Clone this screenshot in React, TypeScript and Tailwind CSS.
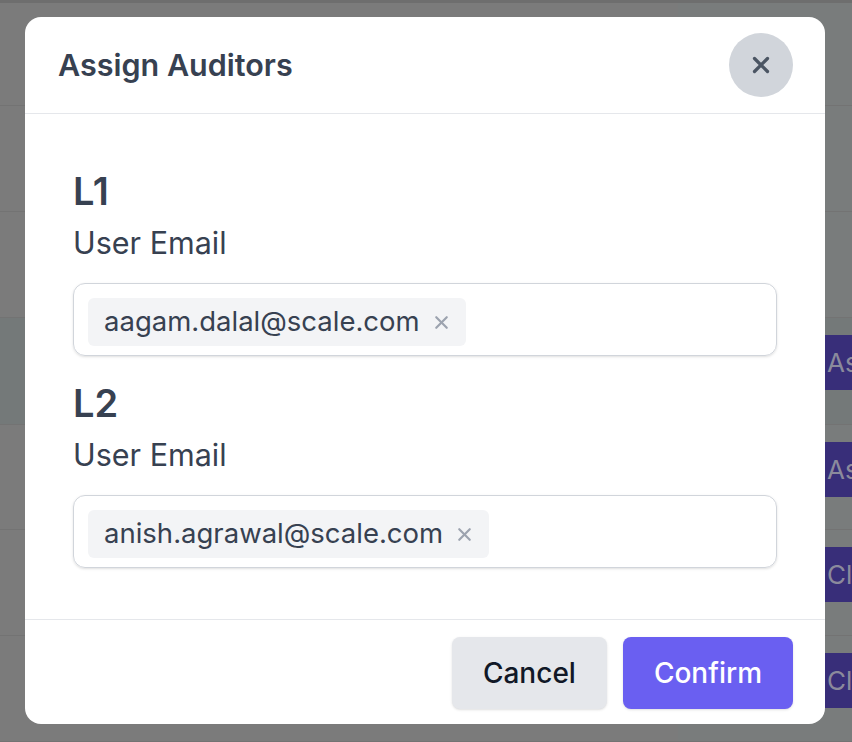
import { X } from 'lucide-react'

const rows = [
    { h: 'h-[103px]', tint: false, btn: '' },
    { h: 'h-[106px]', tint: false, btn: '' },
    { h: 'h-[106px]', tint: false, btn: '' },
    { h: 'h-[107px]', tint: true, btn: 'Assign' },
    { h: 'h-[105px]', tint: false, btn: 'Assign' },
    { h: 'h-[106px]', tint: false, btn: 'Claim' },
    { h: 'h-[106px]', tint: false, btn: 'Claim' },
]

function EmailField({ level, email }: { level: string; email: string }) {
    return (
        <div className="flex flex-col">
            <div className="text-[38px] leading-[40px] font-semibold text-[#374151]">{level}</div>
            <div className="mt-[14px] text-[30.5px] leading-[36px] text-[#374151]">User Email</div>
            <div className="mt-[22px] h-[73px] rounded-xl border border-[#d1d5db] px-[14px] pt-[14px] shadow-sm">
                <span className="inline-flex h-[48px] items-center gap-[11px] rounded-md bg-[#f3f4f6] pl-4 pr-[14px] text-[27.5px] text-[#374151]">
                    {email}
                    <X className="h-[21px] w-[21px] text-[#9ca3af]" strokeWidth={2.5} />
                </span>
            </div>
        </div>
    )
}

export default function App() {
    return (
        <div className="relative h-[742px] w-full overflow-hidden bg-[#7b7b7b]" style={{ fontFamily: 'Inter, "Noto Sans", sans-serif' }}>
            {/* dimmed table underneath */}
            <div className="h-[3px] bg-[#6e6e6e]" />
            {rows.map((r, i) => (
                <div key={i} className={`flex border-b border-[#737373] ${r.h} ${r.tint ? 'bg-[#747979]' : ''}`}>
                    <div className="flex-1" />
                    <div className={`flex w-[174px] items-start pl-[147px] pt-[17px] ${r.tint ? '' : 'bg-[#797c7c]'}`}>
                        {r.btn && (
                            <div className="flex h-[55px] flex-1 items-center overflow-hidden bg-[#382e79] pl-[2px] text-[26px] whitespace-nowrap text-[#8b8a9c]">
                                {r.btn}
                            </div>
                        )}
                    </div>
                </div>
            ))}

            {/* modal */}
            <div className="absolute left-[25px] top-[17px] flex w-[800px] flex-col rounded-2xl bg-white">
                <div className="flex items-center justify-between border-b border-[#e5e7eb] py-4 pl-[33px] pr-8">
                    <h2 className="text-[30.5px] font-semibold text-[#374151]">Assign Auditors</h2>
                    <button className="flex h-16 w-16 items-center justify-center rounded-full bg-[#d1d5db] text-[#4b5563]">
                        <X className="h-[26px] w-[26px]" strokeWidth={3} />
                    </button>
                </div>

                <div className="flex flex-col gap-[27px] px-12 pb-[51px] pt-[57px]">
                    <EmailField level="L1" email="aagam.dalal@scale.com" />
                    <EmailField level="L2" email="anish.agrawal@scale.com" />
                </div>

                <div className="flex justify-end gap-4 border-t border-[#e5e7eb] px-8 pb-[15px] pt-[17px]">
                    <button className="h-[72px] rounded-lg bg-[#e5e7eb] px-[31px] text-[28px] font-medium text-[#111827] shadow-sm">Cancel</button>
                    <button className="h-[72px] rounded-lg bg-[#6a5ff1] px-[31px] text-[28px] font-medium text-white shadow-sm">Confirm</button>
                </div>
            </div>
        </div>
    )
}
